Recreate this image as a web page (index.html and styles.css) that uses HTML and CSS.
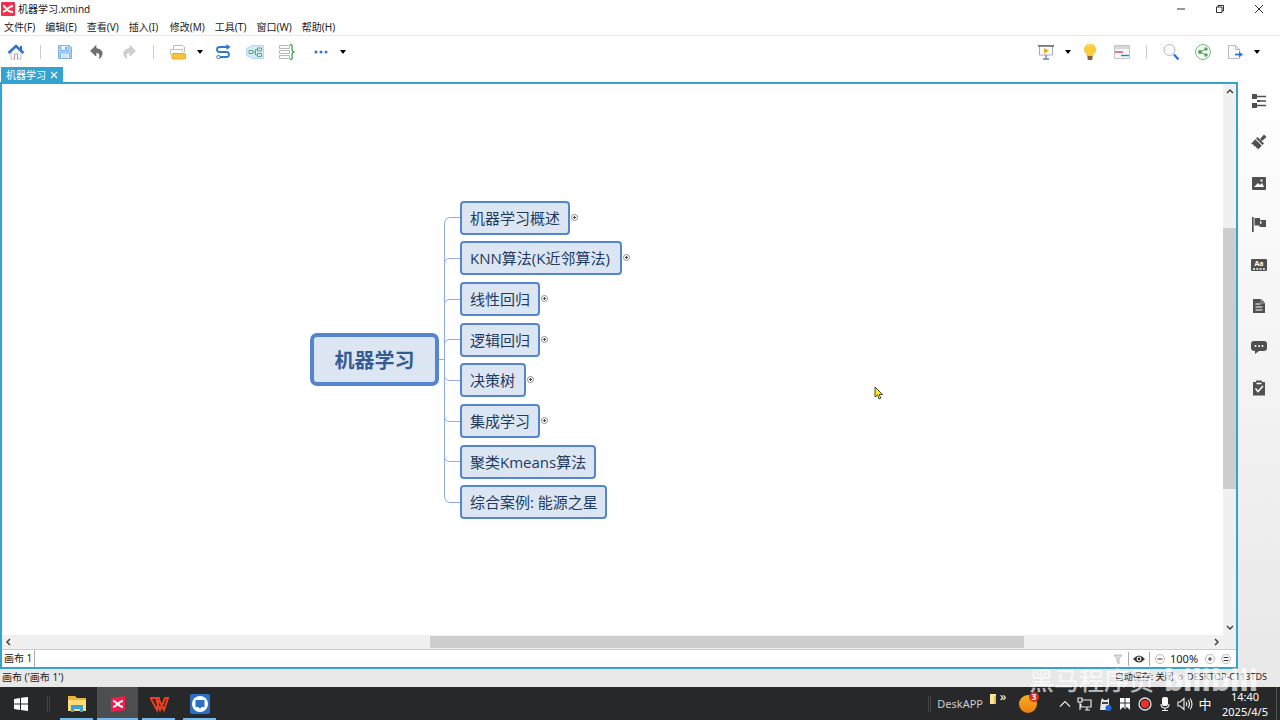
FILE: index.html
```html
<!DOCTYPE html>
<html lang="zh-CN">
<head>
    <meta charset="UTF-8">
    <meta name="viewport" content="width=device-width, initial-scale=1.0">
    <title>机器学习.xmind</title>
    <link rel="stylesheet" href="styles.css">
</head>
<body>
    <header class="titlebar">
        <svg class="app-logo" viewBox="0 0 14 14"><rect width="14" height="14" rx="1" fill="#f0314f"/><path d="M2 4c3 0 3 6 10 6M2 10c3 0 5-6 10-6" fill="none" stroke="#fff" stroke-width="2"/></svg>
        <h1>机器学习.xmind</h1>
        <div class="window-buttons">
            <button aria-label="最小化"><svg viewBox="0 0 10 10"><path d="M1 5h8"/></svg></button>
            <button aria-label="还原"><svg viewBox="0 0 10 10"><path d="M1.500 3h5.500v5.500h-5.500zM3 3V1.500h5.500V7H7"/></svg></button>
            <button aria-label="关闭"><svg viewBox="0 0 10 10"><path d="M1 1l8 8M9 1l-8 8"/></svg></button>
        </div>
    </header>

    <nav class="menubar">
        <button>文件(F)</button>
        <button>编辑(E)</button>
        <button>查看(V)</button>
        <button>插入(I)</button>
        <button>修改(M)</button>
        <button>工具(T)</button>
        <button>窗口(W)</button>
        <button>帮助(H)</button>
    </nav>

    <div class="toolbar">
        <button class="tool" aria-label="主页"><svg viewBox="0 0 18 18"><path d="M4 9v7h10V9L9 4.500z" fill="#fafafa" stroke="#b9bdc4"/><path d="M7.500 16v-5h3v5" fill="#fff" stroke="#b99"/><path d="M13 3h2v4h-2z" fill="#2f6fca"/><path d="M1.500 10L9 3l7.500 7" fill="none" stroke="#2f74d0" stroke-width="2.400"/></svg></button>
        <span class="separator"></span>
        <button class="tool" aria-label="保存"><svg viewBox="0 0 18 18"><path d="M2.500 2.500h11l2 2v11h-13z" fill="#a9d2f7" stroke="#7eb4e8"/><path d="M5 2.500h7v5H5z" fill="#eef7ff" stroke="#7eb4e8"/><path d="M9 4h2v2.500H9z" fill="#6ca8e2"/><path d="M4.500 10h9v5.500h-9z" fill="#fff" stroke="#7eb4e8"/><path d="M6 12h6M6 14h6" stroke="#9fc6ee"/></svg></button>
        <button class="tool" aria-label="撤销"><svg viewBox="0 0 18 18"><path d="M8 2.500L2.500 8 8 13v-3.500c3 0 4.500 2 3.500 6C16 11.500 15 6 8 5.500z" fill="#707070" stroke="#555" stroke-width=".6"/></svg></button>
        <button class="tool" aria-label="重做"><svg viewBox="0 0 18 18"><path d="M10 2.500L15.500 8 10 13v-3.500c-3 0-4.500 2-3.500 6C2 11.500 3 6 10 5.500z" fill="#d0d0d0" stroke="#bbb" stroke-width=".6"/></svg></button>
        <span class="separator"></span>
        <button class="tool" aria-label="主题"><svg viewBox="0 0 18 18"><path d="M4.500 6.500V2.500h9l2 1.500v5" fill="#fff" stroke="#bbb"/><path d="M1.500 11.500V6.500h12V9" fill="#fafafa" stroke="#c4c4c4"/><rect x="3" y="10.500" width="13.500" height="5.500" rx="1" fill="#f8c33c" stroke="#e3ab2c"/></svg></button>
        <button class="arrow" aria-label="更多主题"></button>
        <button class="tool next" aria-label="联系"><svg viewBox="0 0 18 18"><path d="M13 4H5.500a2.500 2.500 0 000 5h7a2.500 2.500 0 010 5H6" fill="none" stroke="#2f78d7" stroke-width="1.800"/><path d="M12.500 1l4 3-4 3z" fill="#2f78d7"/><circle cx="4.500" cy="14" r="1.700" fill="#fff" stroke="#2f78d7"/></svg></button>
        <button class="tool" aria-label="外框"><svg viewBox="0 0 18 18"><path d="M.5 5.500l6-3h11v13h-11l-6-3z" fill="#d5e9fa" stroke="#bad6ee"/><path d="M3 7.500h4v3H3zM11.500 5h4v3h-4zM11.500 10.500h4v3h-4zM7 9h2.500M11.500 6.500h-2V12h2" fill="none" stroke="#5cae70"/></svg></button>
        <button class="tool" aria-label="概要"><svg viewBox="0 0 18 18"><path d="M1.500 2.500h10v3h-10zM1.500 7.500h10v3h-10zM1.500 12.500h10v3h-10z" fill="#fafafa" stroke="#b9b9b9"/><path d="M12 1.500c3 0 2 2 2 4.500 0 2 .5 3 2.500 3-2 0-2.500 1-2.500 3 0 2.500 1 4.500-2 4.500" fill="none" stroke="#55a860" stroke-width="1.400"/></svg></button>
        <button class="tool more-tools" aria-label="更多"><svg viewBox="0 0 18 18"><g fill="#2f74d0"><circle cx="4" cy="9" r="1.500"/><circle cx="9" cy="9" r="1.500"/><circle cx="14" cy="9" r="1.500"/></g></svg></button>
        <button class="arrow" aria-label="展开更多"></button>

        <div class="toolbar-right">
            <button class="tool" aria-label="演示"><svg viewBox="0 0 18 18"><path d="M2.500 3v9h13V3" fill="#fff" stroke="#aaa"/><path d="M1 2h16v1.800H1z" fill="#777"/><path d="M7 5l5 2.700-5 2.800z" fill="#f0a918"/><path d="M9 12v4M6 16h6" stroke="#6582a8" stroke-width="1.300"/></svg></button>
            <button class="arrow" aria-label="演示选项"></button>
            <button class="tool" aria-label="头脑风暴"><svg viewBox="0 0 18 18"><path d="M9 1a5.600 5.600 0 00-3 10.300V13h6v-1.700A5.600 5.600 0 009 1z" fill="#fccf38" stroke="#e8af20" stroke-width=".6"/><path d="M6 3c1-1.500 4-1.500 5 0" stroke="#fff0a0" fill="none"/><path d="M6.500 13h5v3l-1 1h-3l-1-1z" fill="#7b6340"/></svg></button>
            <button class="tool" aria-label="甘特图"><svg viewBox="0 0 18 18"><path d="M1.500 2.500h15v13h-15z" fill="#f5f8fa" stroke="#c2c6ca"/><path d="M2 3h14v3H2z" fill="#d5d8db"/><path d="M2 9h8" stroke="#e04444" stroke-width="1.400"/><path d="M8 12.500h8" stroke="#2f78d7" stroke-width="1.400"/></svg></button>
            <span class="separator"></span>
            <button class="tool" aria-label="搜索"><svg viewBox="0 0 18 18"><circle cx="7.500" cy="7" r="5.500" fill="#fafcff" stroke="#b5b9bf"/><path d="M12 11.500l4.500 5" stroke="#2f74d0" stroke-width="2.400"/></svg></button>
            <button class="tool" aria-label="分享"><svg viewBox="0 0 18 18"><circle cx="9" cy="9" r="7.500" fill="#f2fbf2" stroke="#7cbd80"/><path d="M12 6L6 9l6 3" fill="none" stroke="#5a9b5e"/><g fill="#5a9b5e"><circle cx="12" cy="6" r="1.700"/><circle cx="6" cy="9" r="2"/><circle cx="12" cy="12" r="1.700"/></g></svg></button>
            <button class="tool" aria-label="导出"><svg viewBox="0 0 18 18"><path d="M2.500 2.500h7l4 4v9h-11z" fill="#fafafa" stroke="#bbb"/><path d="M9.500 2.500v4h4" fill="none" stroke="#bbb"/><path d="M9 11.500h5" stroke="#2f78d7" stroke-width="1.800"/><path d="M13 8.500l4 3-4 3z" fill="#2f78d7"/></svg></button>
            <button class="arrow" aria-label="导出选项"></button>
        </div>
    </div>

    <main class="workspace">
        <section class="editor">
            <div class="tabs">
                <button class="tab">机器学习 <svg viewBox="0 0 8 8"><path d="M1 1l6 6M7 1L1 7" stroke="#fff" stroke-width="1.200"/></svg></button>
            </div>
            <div class="sheet">
                <div class="canvas">
                    <svg class="links" width="470" height="450">
                        <path d="M437 275.500h5.500M458 133.500h-9q-6.500 0-6.500 6.500V412q0 6.500 6.500 6.500h9"/>
                        <path d="M458 174.500h-10q-5.500 0-5.500 5M458 215.500h-10q-5.500 0-5.500 5M458 255.500h-10q-5.500 0-5.500 5"/>
                        <path d="M458 296.500h-10q-5.500 0-5.500-5M458 337.500h-10q-5.500 0-5.500-5M458 377.500h-10q-5.500 0-5.500-5"/>
                    </svg>
                    <div class="central">机器学习</div>
                    <div class="topic topic-1">机器学习概述<button class="expand" aria-label="展开"></button></div>
                    <div class="topic topic-2">KNN算法(K近邻算法)<button class="expand" aria-label="展开"></button></div>
                    <div class="topic topic-3">线性回归<button class="expand" aria-label="展开"></button></div>
                    <div class="topic topic-4">逻辑回归<button class="expand" aria-label="展开"></button></div>
                    <div class="topic topic-5">决策树<button class="expand" aria-label="展开"></button></div>
                    <div class="topic topic-6">集成学习<button class="expand" aria-label="展开"></button></div>
                    <div class="topic topic-7">聚类Kmeans算法</div>
                    <div class="topic topic-8">综合案例: 能源之星</div>
                    <svg class="cursor" viewBox="0 0 10 14"><path d="M1 1v10l2.500-2L5 13l2-1-2-3.500h3.500z" fill="#fff200" stroke="#333" stroke-width=".9"/></svg>
                </div>
                <div class="scroll-y">
                    <svg viewBox="0 0 8 8"><path d="M1 6l3-3 3 3"/></svg>
                    <div class="track"><div class="thumb"></div></div>
                    <svg viewBox="0 0 8 8"><path d="M1 2l3 3 3-3"/></svg>
                </div>
                <div class="scroll-x">
                    <svg viewBox="0 0 8 8"><path d="M5 1L2 4l3 3"/></svg>
                    <div class="track"><div class="thumb"></div></div>
                    <svg viewBox="0 0 8 8"><path d="M3 1l3 3-3 3"/></svg>
                </div>
                <div class="sheet-bar">
                    <button class="sheet-tab">画布 1</button>
                    <div class="sheet-tools">
                        <button aria-label="筛选"><svg viewBox="0 0 12 12"><path d="M2 2h8L7 6v5L5 9V6z" fill="#ddd" stroke="#aaa" stroke-width=".7"/></svg></button>
                        <span class="divider"></span>
                        <button aria-label="视图"><svg viewBox="0 0 12 12"><path d="M0 6q6-7 12 0-6 7-12 0z" fill="#333"/><circle cx="6" cy="6" r="2.400" fill="#fff"/><circle cx="6" cy="6" r="1.400" fill="#333"/></svg></button>
                        <span class="divider"></span>
                        <button aria-label="缩小"><svg viewBox="0 0 12 12"><circle cx="6" cy="6" r="4.500" class="ring"/><path d="M3.500 6h5" class="sign"/></svg></button>
                        <span class="zoom-value">100%</span>
                        <button aria-label="放大"><svg viewBox="0 0 12 12"><circle cx="6" cy="6" r="4.500" class="ring"/><path d="M4 6h4M6 4v4" class="sign"/></svg></button>
                        <button aria-label="适应画布"><svg viewBox="0 0 12 12"><circle cx="6" cy="6" r="4.500" class="ring"/><path d="M3.500 4.500h5M3.500 7.500h5" class="sign"/></svg></button>
                    </div>
                </div>
            </div>
        </section>

        <aside class="sidebar">
            <button aria-label="大纲"><svg viewBox="0 0 16 16"><path d="M1 1h5v5H1zM1 10h5v5H1zM6 7h3v2H6z"/><path d="M6 3.500h9M8 8h7M6 12.500h9" class="stroke"/></svg></button>
            <button aria-label="格式"><svg viewBox="0 0 16 16"><path d="M6.500 3l6.500 6.500-1.500 1.500L5 4.500zM4.300 5.200l6.500 6.500L7 15.500l-1-2-1 .5-.5-2-1.500.5-.5-2L0 10z"/><path d="M9 5l4-4.500L15.500 3 11 7z"/></svg></button>
            <button aria-label="图片"><svg viewBox="0 0 16 16"><rect x="1" y="2" width="14" height="13" rx="1"/><path d="M3 12l4-4 2 2 2-2 2 4zM9.500 4.500h2v2h-2z" fill="#fff"/></svg></button>
            <button aria-label="图标"><svg viewBox="0 0 16 16"><path d="M1 1h1.700v15H1zM3.500 2H9v2h6v7H8.500V9.500h-5z"/><path d="M9 5h1.500v3H9z" fill="#ddd"/></svg></button>
            <button aria-label="主题样式"><svg viewBox="0 0 16 16"><rect y="2" width="16" height="12" rx="1"/><path d="M2 12h12" stroke="#fff" stroke-width="1.300" stroke-dasharray="2 1.300"/><text x="8" y="9" class="aa">Aa</text></svg></button>
            <button aria-label="备注"><svg viewBox="0 0 16 16"><path d="M2 1h8l4 4v10H2z"/><path d="M4.500 6h5M4.500 9h7M4.500 12h7" stroke="#fff"/><path d="M10 1v4h4" fill="none" stroke="#bbb" stroke-width=".8"/></svg></button>
            <button aria-label="批注"><svg viewBox="0 0 16 16"><path d="M3 2h10q3 0 3 3v4q0 3-3 3H8l-4 3v-3Q0 12 0 9V5q0-3 3-3z"/><g fill="#fff"><circle cx="4.500" cy="7" r="1"/><circle cx="8" cy="7" r="1"/><circle cx="11.500" cy="7" r="1"/></g></svg></button>
            <button aria-label="任务"><svg viewBox="0 0 16 16"><path d="M2 2h3V.5h6V2h3v13.500H2z"/><path d="M4.500 8.500l2.500 3 5-5.500M5.500 3.500h5" fill="none" stroke="#fff" stroke-width="1.500"/></svg></button>
        </aside>
    </main>

    <footer class="statusbar">
        <span>画布 ('画布 1')</span>
        <span class="status-right">自动保存: 关闭 <i></i> DESKTOP-C113TDS</span>
    </footer>

    <div class="taskbar">
        <button class="app start" aria-label="开始"><svg viewBox="0 0 14 14"><path d="M0 2l6-1v5.500H0zM7 .8L14 0v6.500H7zM0 7.500h6V13l-6-1zM7 7.500h7V14l-7-1z" fill="#fff"/></svg></button>
        <span class="grip"></span>
        <button class="app running" aria-label="文件资源管理器"><svg viewBox="0 0 20 20"><path d="M1 2h7l2 2h9v13H1z" fill="#e9b63d"/><path d="M1 6h18v11H1z" fill="#fddc78"/><path d="M4 18v-7h12v7h-3v-3H7v3z" fill="#3ea0dc"/></svg></button>
        <button class="app running active" aria-label="XMind"><svg viewBox="0 0 20 20"><path d="M3 4l14-2v14L3 18z" fill="#ef1d4d"/><path d="M5 7c4 0 5 6 10 6M5 13c4 0 5-6 10-6" fill="none" stroke="#fff" stroke-width="2.200"/></svg></button>
        <button class="app running" aria-label="WPS"><svg viewBox="0 0 20 20"><path d="M1 4h9L8 16 2 5M7 5l4 11 5-12h3l-4 12-5-10" fill="none" stroke="#ee3f24" stroke-width="2"/></svg></button>
        <button class="app running" aria-label="远程桌面"><svg viewBox="0 0 20 20"><rect width="20" height="20" rx="2" fill="#2b6fc7"/><circle cx="10" cy="10" r="8" fill="#fff"/><path d="M5.500 6h9v7h-3l-1.500 2-1.500-2h-3z" fill="#2b6fc7"/></svg></button>

        <div class="tray">
            <span class="grip"></span>
            <span class="desk">DeskAPP</span>
            <svg class="folder" viewBox="0 0 8 12"><path d="M1 1h6v10H1z" fill="#ffe597"/><path d="M5 3h2v8H5z" fill="#e9bd55"/></svg>
            <button class="more">»</button>
            <div class="ball"><span class="badge">3</span></div>
            <button aria-label="显示隐藏的图标"><svg viewBox="0 0 16 16"><path d="M3 10.500l5-5 5 5" class="line"/></svg></button>
            <button aria-label="网络"><svg viewBox="0 0 16 16"><path d="M5 4h9v7H4V8M8 14h5M10 11v3M1 2h4v4H1zM3 6v8" class="line"/></svg></button>
            <button aria-label="助手"><svg viewBox="0 0 16 16"><path d="M4 5l1-3 2 2h3l2-2v12H3z" fill="#e8e8e8"/><path d="M5 7h6" stroke="#444" stroke-width="2"/><circle cx="11.500" cy="12" r="3" fill="#2467da"/></svg></button>
            <button aria-label="安全中心"><svg viewBox="0 0 16 16"><path d="M3 2h10v12l-3-3-2 2-2-2-3 3z" fill="#fff"/><path d="M8 2v10M3 7h10" stroke="#333"/></svg></button>
            <button aria-label="录制"><svg viewBox="0 0 16 16"><circle cx="8" cy="8" r="6" fill="none" stroke="#e0e0e0" stroke-width="1.300"/><circle cx="8" cy="8" r="4" fill="#f03030"/></svg></button>
            <button aria-label="麦克风"><svg viewBox="0 0 16 16"><rect x="5" y="1" width="6" height="9" rx="2" fill="#fff"/><path d="M4 8q0 4 4 4t4-4M8 12v3M5 14.500h6" class="line"/></svg></button>
            <button aria-label="音量"><svg viewBox="0 0 16 16"><path d="M1 6h2l4-3.500v11L3 10H1zM9 6q1.500 2 0 4M11 4q3 4 0 8M13 2.500q4 5.500 0 11" class="line"/></svg></button>
            <button>中</button>
            <time class="clock">14:40<br>2025/4/5</time>
            <span class="show-desktop"></span>
        </div>
    </div>

    <div class="watermark"><span>黑马程序员</span><b>bilibili</b></div>
</body>
</html>
```
FILE: styles.css
```css
:root {
    --accent: #35a3d1;
    --topic-border: #5585d0;
    --topic-fill: #dce6f3;
    --text-color: #222;
}

* {
    box-sizing: border-box;
    margin: 0;
    padding: 0;
}

body {
    font-family: "Noto Sans", "Noto Sans CJK SC", sans-serif;
    font-size: 10px;
    line-height: 14px;
    color: var(--text-color);
    background-color: #fff;
    height: 100vh;
    display: flex;
    flex-direction: column;
    overflow: hidden;
}

button {
    font: inherit;
    color: inherit;
    background: none;
    border: none;
    white-space: nowrap;
}

svg {
    display: block;
    flex-shrink: 0;
}

/* Title and menu */
.titlebar {
    display: flex;
    align-items: center;
    height: 18px;
    padding-left: 1px;
    gap: 3px;
}

.app-logo {
    width: 14px;
    height: 14px;
}

h1 {
    font-size: 10px;
    font-weight: 400;
}

.window-buttons {
    display: flex;
    margin-left: auto;
    padding-right: 2px;
}

.window-buttons button {
    display: flex;
    justify-content: center;
    width: 39px;
}

.window-buttons svg {
    width: 10px;
    height: 10px;
    fill: none;
    stroke: #333;
}

.menubar {
    display: flex;
    align-items: center;
    height: 18px;
    gap: 10px;
    padding: 1px 4px 0;
    border-bottom: 1px solid #e9e6ea;
}

.menubar button {
    min-width: 31px;
    text-align: left;
}

/* Toolbar */
.toolbar,
.toolbar-right {
    display: flex;
    align-items: center;
}

.toolbar {
    height: 31px;
}

.toolbar-right {
    margin-left: auto;
    padding-right: 17px;
}

.tool {
    display: flex;
    justify-content: center;
    width: 32px;
}

.tool svg {
    width: 18px;
    height: 18px;
}

.next {
    margin-left: 1px;
}

.more-tools {
    margin-left: 2px;
}

.separator {
    width: 1px;
    height: 14px;
    margin: 0 8px;
    background-color: #ccc;
}

.arrow {
    width: 12px;
    height: 12px;
    display: flex;
    align-items: center;
    justify-content: center;
}

.arrow::before {
    content: "";
    border: 3px solid transparent;
    border-top: 4px solid #000;
    border-bottom: 0;
}

/* Workspace */
.workspace {
    flex: 1;
    display: flex;
    min-height: 0;
}

.editor {
    flex: 1;
    display: flex;
    flex-direction: column;
    min-width: 0;
}

.tabs {
    height: 15px;
    padding-left: 1px;
}

.tab {
    display: flex;
    align-items: center;
    gap: 4px;
    height: 15px;
    padding: 0 5px;
    color: #fff;
    background-color: var(--accent);
}

.tab svg {
    width: 8px;
    height: 8px;
}

.sheet {
    flex: 1;
    display: grid;
    grid-template-columns: 1fr 13px;
    grid-template-rows: 1fr 14px 18px;
    min-height: 0;
    border: 2px solid var(--accent);
}

.canvas {
    position: relative;
    overflow: hidden;
}

/* Mind map nodes */
.links {
    position: absolute;
    left: 0;
    top: 0;
    fill: none;
    stroke: #91abe0;
}

.central,
.topic {
    position: absolute;
    display: flex;
    align-items: center;
    white-space: nowrap;
    border: 2px solid var(--topic-border);
    background-color: var(--topic-fill);
}

.central {
    left: 308px;
    top: 249px;
    width: 129px;
    height: 53px;
    padding-top: 2px;
    justify-content: center;
    border-width: 4px;
    border-radius: 7px;
    font-size: 20px;
    font-weight: 700;
    color: #365b91;
}

.topic {
    left: 458px;
    height: 34px;
    padding: 0 8px;
    border-radius: 4px;
    font-family: "Open Sans", "Noto Sans CJK SC", sans-serif;
    font-size: 15px;
    color: #1f3a5f;
}

.topic-1 { top: 117px; width: 110px; }
.topic-2 { top: 157px; width: 162px; }
.topic-3 { top: 198px; width: 80px; }
.topic-4 { top: 239px; width: 80px; }
.topic-5 { top: 279px; width: 66px; }
.topic-6 { top: 320px; width: 80px; }
.topic-7 { top: 361px; width: 136px; }
.topic-8 { top: 401px; width: 147px; }

.expand {
    position: absolute;
    left: 100%;
    top: 11px;
    width: 7px;
    height: 7px;
    margin-left: 3px;
    border: 1px solid #8a8f99;
    border-radius: 50%;
    background: linear-gradient(#444, #444) center / 3px 1px no-repeat, linear-gradient(#444, #444) center / 1px 3px no-repeat;
}

.cursor {
    position: absolute;
    left: 872px;
    top: 302px;
    width: 10px;
    height: 14px;
}

/* Scrollbars */
.scroll-y,
.scroll-x {
    display: flex;
    align-items: center;
    background-color: #f0f0f0;
}

.scroll-y {
    flex-direction: column;
    padding: 3px 0;
}

.scroll-x {
    grid-column: 1 / 3;
    padding: 0 16px 0 3px;
}

.scroll-y svg,
.scroll-x svg {
    width: 8px;
    height: 8px;
    fill: none;
    stroke: #444;
    stroke-width: 1.5;
}

.track {
    display: flex;
    flex: 1;
}

.scroll-y .track {
    flex-direction: column;
    width: 13px;
    padding-top: 133px;
}

.scroll-x .track {
    height: 12px;
    padding-left: 417px;
}

.thumb {
    background-color: #cdcdcd;
}

.scroll-y .thumb {
    height: 66%;
}

.scroll-x .thumb {
    width: 76%;
}

/* Sheet tabs */
.sheet-bar {
    grid-column: 1 / 3;
    display: flex;
    align-items: center;
    border-top: 1px solid #ccc;
}

.sheet-tab {
    height: 17px;
    padding: 0 2px 2px;
    border-right: 1px solid #aaa;
}

.sheet-tools {
    display: flex;
    align-items: center;
    gap: 4px;
    margin-left: auto;
    padding-right: 4px;
}

.sheet-tools svg {
    width: 12px;
    height: 12px;
}

.divider {
    width: 1px;
    height: 14px;
    background-color: #aaa;
}

.ring {
    fill: #fff;
    stroke: #bbb;
}

.sign {
    stroke: #333;
}

.zoom-value {
    width: 30px;
    font-size: 11px;
}

/* Right sidebar */
.sidebar {
    width: 42px;
    margin-top: 15px;
    padding-top: 11px;
    display: flex;
    flex-direction: column;
    align-items: center;
    gap: 25px;
    background: linear-gradient(#fff, #e8e8e8);
}

.sidebar svg {
    width: 16px;
    height: 16px;
    fill: #505050;
}

.sidebar .stroke {
    fill: none;
    stroke: #505050;
    stroke-width: 1.3;
}

.sidebar .aa {
    fill: #fff;
    font-size: 7px;
    font-weight: 700;
    text-anchor: middle;
}

/* Status bar */
.statusbar {
    display: flex;
    align-items: center;
    justify-content: space-between;
    height: 18px;
    padding: 0 13px 2px 2px;
    background-color: #e8e8e8;
}

.status-right {
    font-size: 9px;
}

.status-right i {
    display: inline-block;
    width: 5px;
    height: 5px;
    margin: 0 2px;
    border: 1px solid #888;
    border-radius: 50%;
}

/* Taskbar */
.taskbar {
    display: flex;
    align-items: center;
    height: 33px;
    color: #fff;
    background-color: #262829;
}

.app {
    position: relative;
    display: flex;
    align-items: center;
    justify-content: center;
    width: 41px;
    height: 33px;
}

.app svg {
    width: 20px;
    height: 20px;
}

.start svg {
    width: 14px;
    height: 14px;
}

.grip {
    width: 3px;
    height: 16px;
    margin: 0 6px;
    border: 1px solid #444;
    border-width: 0 1px;
}

.running::after {
    content: "";
    position: absolute;
    left: 4px;
    right: 4px;
    bottom: 0;
    height: 2px;
    background-color: #76b9ed;
}

.active {
    background-color: #4c4e50;
}

.active::after {
    left: 0;
    right: 0;
}

.tray {
    display: flex;
    align-items: center;
    height: 33px;
    margin-left: auto;
}

.tray button {
    display: flex;
    justify-content: center;
    width: 20px;
    font-size: 13px;
}

.tray button svg {
    width: 16px;
    height: 16px;
}

.tray .line {
    fill: none;
    stroke: #e8e8e8;
    stroke-width: 1.2;
}

.desk {
    font-size: 11px;
    color: #ccc;
}

.folder {
    width: 8px;
    height: 12px;
    margin: 0 0 10px 6px;
}

.tray .more {
    width: 12px;
    margin-bottom: 16px;
}

.ball {
    position: relative;
    width: 18px;
    height: 18px;
    margin: 0 18px 0 10px;
    border-radius: 50%;
    background: linear-gradient(#f9b020, #e87f12);
}

.badge {
    position: absolute;
    right: -2px;
    top: -3px;
    width: 10px;
    height: 10px;
    border-radius: 50%;
    font-size: 8px;
    font-weight: 700;
    line-height: 10px;
    text-align: center;
    background-color: #d42c20;
}

.clock {
    width: 60px;
    font-size: 11px;
    line-height: 15px;
    text-align: center;
}

.show-desktop {
    width: 1px;
    height: 33px;
    margin: 0 3px 0 1px;
    background-color: #555;
}

/* Video watermark */
.watermark {
    position: absolute;
    right: 22px;
    bottom: 22px;
    display: flex;
    align-items: center;
    gap: 10px;
    height: 36px;
    font-size: 25px;
    font-weight: 500;
    line-height: 36px;
    color: #fff;
    opacity: 0.65;
    pointer-events: none;
}

.watermark b {
    font-size: 30px;
    font-weight: 800;
}
```
